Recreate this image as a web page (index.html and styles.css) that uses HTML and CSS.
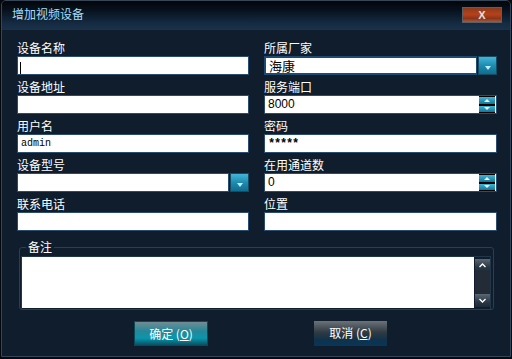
FILE: index.html
```html
<!DOCTYPE html>
<html>
	<head>
		<meta charset="UTF-8">
		<title>增加视频设备</title>
		<link rel="stylesheet" href="styles.css">
	</head>
	<body>
		<div class="window">
			<div class="titlebar">
				<span class="title">增加视频设备</span>
				<span class="close">X</span>
			</div>
			<div class="content">
				<div class="grid">
					<div class="field">
						<label>设备名称</label>
						<div class="box"><span class="caret"></span></div>
					</div>
					<div class="field">
						<label>所属厂家</label>
						<div class="combo">
							<div class="box big">海康</div>
							<span class="drop"><i></i></span>
						</div>
					</div>
					<div class="field">
						<label>设备地址</label>
						<div class="box"></div>
					</div>
					<div class="field">
						<label>服务端口</label>
						<div class="box num">8000<span class="spin"><b class="up"></b><b class="down"></b></span></div>
					</div>
					<div class="field">
						<label>用户名</label>
						<div class="box mono">admin</div>
					</div>
					<div class="field">
						<label>密码</label>
						<div class="box pass">*****</div>
					</div>
					<div class="field">
						<label>设备型号</label>
						<div class="combo">
							<div class="box"></div>
							<span class="drop"><i></i></span>
						</div>
					</div>
					<div class="field">
						<label>在用通道数</label>
						<div class="box num">0<span class="spin"><b class="up"></b><b class="down"></b></span></div>
					</div>
					<div class="field">
						<label>联系电话</label>
						<div class="box"></div>
					</div>
					<div class="field">
						<label>位置</label>
						<div class="box"></div>
					</div>
				</div>

				<fieldset class="notes">
					<legend>备注</legend>
					<div class="memo">
						<div class="area"></div>
						<div class="scroll">
							<span class="sbtn"><svg width="7" height="5" viewBox="0 0 7 5"><polyline points="0.5,4 3.5,1 6.5,4" fill="none" stroke="#fff" stroke-width="1.4"/></svg></span>
							<span class="track"></span>
							<span class="sbtn"><svg width="7" height="5" viewBox="0 0 7 5"><polyline points="0.5,1 3.5,4 6.5,1" fill="none" stroke="#fff" stroke-width="1.4"/></svg></span>
						</div>
					</div>
				</fieldset>

				<div class="actions">
					<span class="btn ok">确定 (<u>O</u>)</span>
					<span class="btn cancel">取消 (<u>C</u>)</span>
				</div>
			</div>
		</div>
	</body>
</html>
```

FILE: styles.css
```css
*{padding:0;margin:0;box-sizing:border-box;}
body{background:#05090e;width:512px;height:359px;overflow:hidden;
	font-family:"Noto Sans CJK SC","Liberation Sans",sans-serif;font-size:12px;color:#fff;}

.window{width:510px;height:357px;margin-left:1px;border:1px solid #34465a;border-radius:5px 5px 0 0;
	background:#0f1d2c;overflow:hidden;}

.titlebar{height:29px;display:flex;align-items:center;justify-content:space-between;padding:0 8px 3px 10px;
	background:linear-gradient(#020509 0%,#07111c 30%,#142a40 75%,#1a3249 100%);}
.title{color:#a6dcf6;font-size:12px;line-height:14px;}
.close{width:40px;height:16px;margin-top:2px;border:1px solid #5c5f62;
	background:linear-gradient(#8a3a1e 0%,#b5431a 45%,#8c3418 75%,#a3584a 100%);
	color:#e0e0e0;font:bold 11px/14px "Liberation Sans",sans-serif;text-align:center;}

.content{padding:9px 14px 0 15px;}

.grid{display:grid;grid-template-columns:232px 233px;column-gap:15px;row-gap:3px;}
.field label{display:block;height:17px;line-height:18px;font-size:12px;color:#fff;}

.box{height:19px;background:#fff;border:1px solid #2a4c6e;color:#000;line-height:17px;padding-left:3px;
	position:relative;}
.box.big{font-size:13px;border:2px solid #1d4a72;border-right-width:1px;line-height:15px;}
.box.num{font-family:"Liberation Sans",sans-serif;font-size:12px;}
.box.mono{font-family:"Liberation Mono",monospace;font-size:10px;}
.box.pass{font:bold 12px/19px "Liberation Mono",monospace;letter-spacing:-1.2px;}
.caret{display:inline-block;width:1px;height:12px;background:#000;vertical-align:middle;margin-left:-1px;}

.combo{display:flex;gap:1px;}
.combo .box{flex:1;}
.drop{width:19px;height:19px;border:1px solid #164b62;display:flex;align-items:center;justify-content:center;
	background:linear-gradient(#43b6d8 0%,#1d8cb0 50%,#0f6d8f 100%);}
.drop i{width:0;height:0;border-left:3px solid transparent;border-right:3px solid transparent;
	border-top:4px solid #bfeefc;margin-top:4px;}

.spin{position:absolute;right:1px;top:0;width:16px;height:17px;border-top:1px solid #000;border-bottom:1px solid #000;
	display:flex;flex-direction:column;gap:2px;background:#000;}
.spin b{flex:1;display:flex;justify-content:center;align-items:center;
	background:linear-gradient(#42b4d6,#137597);}
.spin b::after{content:"";width:0;height:0;border-left:3px solid transparent;border-right:3px solid transparent;}
.spin .up::after{border-bottom:3px solid #e6f8ff;}
.spin .down::after{border-top:3px solid #e6f8ff;}

.notes{margin:10px 2px 0 2px;border:1px solid #2a3f55;border-radius:3px;padding:3px 2px 0 1px;}
.notes legend{margin-left:5px;padding:0 2px;font-size:12px;line-height:12px;color:#fff;}
.memo{display:flex;height:53px;border:1px solid #22364a;border-bottom:0;}
.area{flex:1;background:#fff;height:51px;}
.scroll{width:15px;margin-left:1px;display:flex;flex-direction:column;padding:2px 0 2px 0;}
.sbtn{height:13px;display:flex;align-items:center;justify-content:center;
	background:linear-gradient(#5a6873,#2c3845 60%,#1c2a38);}
.track{flex:1;background:#232b36;}

.actions{display:flex;gap:106px;padding-left:117px;margin-top:11px;}
.btn{height:25px;width:74px;text-align:center;line-height:24px;color:#fff;font-size:12px;}
.btn u{text-decoration:underline;}
.ok{border:1px solid #0c4a5a;background:linear-gradient(#6f8d93 0%,#25879a 40%,#0a97ad 70%,#0b4f63 100%);}
.cancel{width:73px;background:linear-gradient(#6a7378 0%,#303a42 45%,#10324a 75%,#07365a 100%);}
```
